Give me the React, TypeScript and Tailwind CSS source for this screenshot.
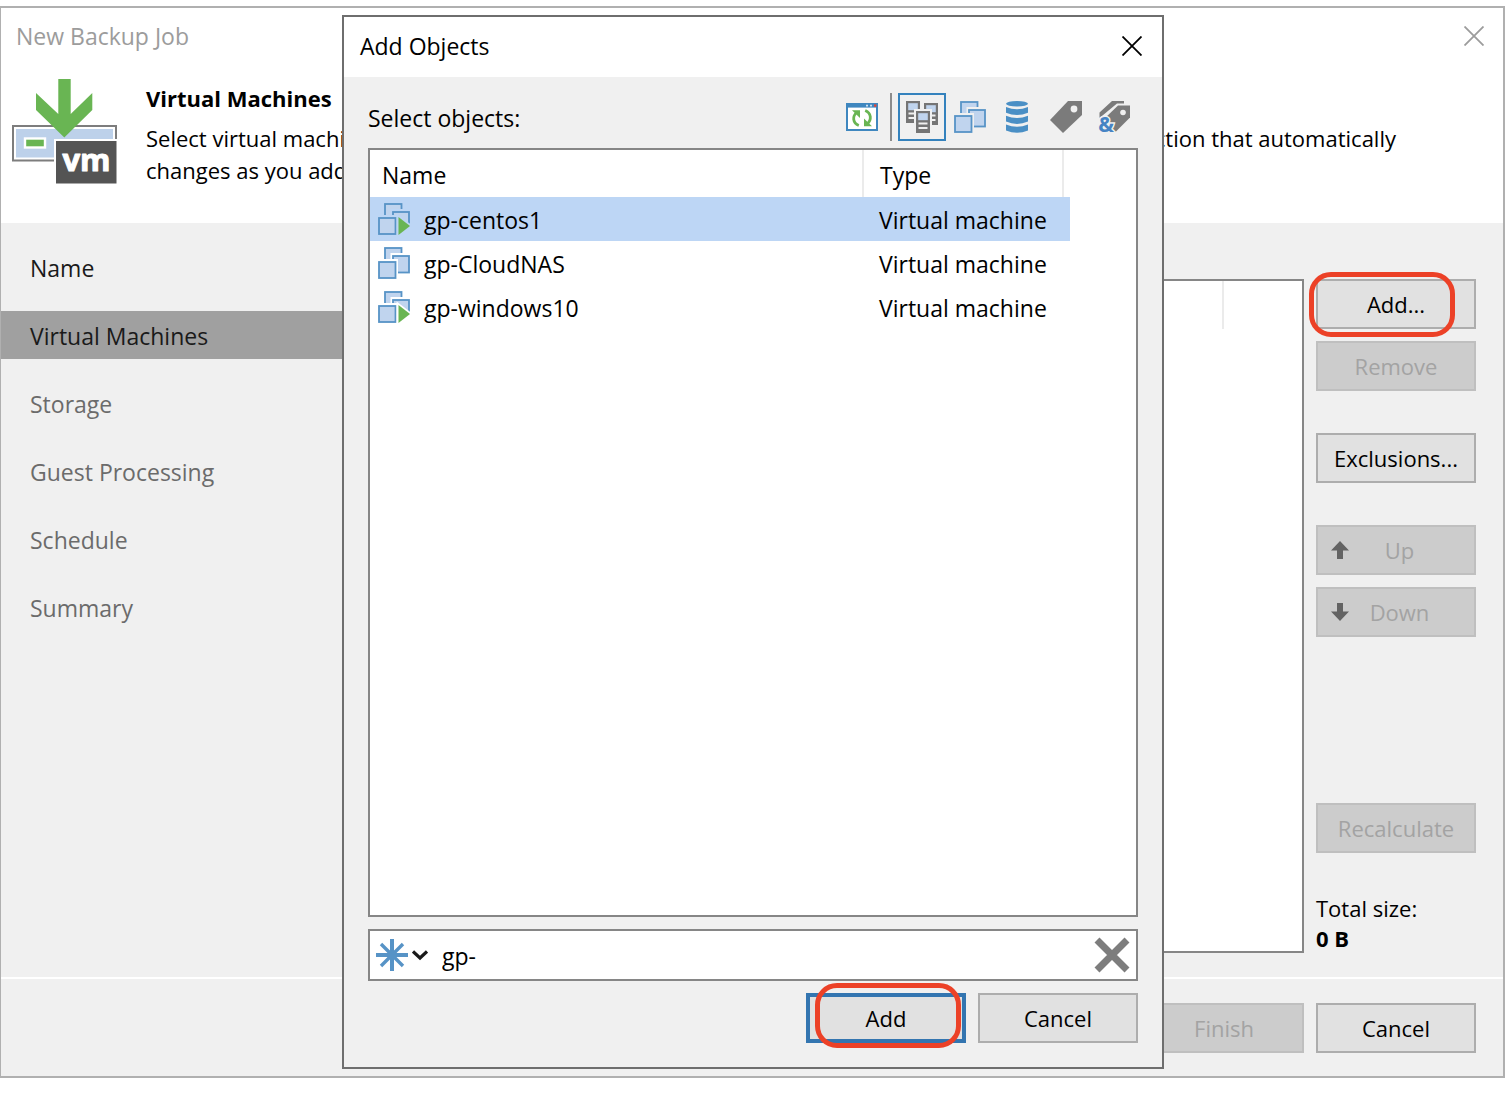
import { useState } from 'react';
import type { ReactNode } from 'react';
import clsx from 'clsx';

const steps = ['Name', 'Virtual Machines', 'Storage', 'Guest Processing', 'Schedule', 'Summary'];

const objects = [
  { name: 'gp-centos1', type: 'Virtual machine', running: true },
  { name: 'gp-CloudNAS', type: 'Virtual machine', running: false },
  { name: 'gp-windows10', type: 'Virtual machine', running: true },
];

function CloseIcon() {
  return (
    <svg className="h-5 w-5" viewBox="0 0 20 20" fill="none" stroke="currentColor" strokeWidth="1.8">
      <path d="M0.5 0.5 19.5 19.5M19.5 0.5 0.5 19.5" />
    </svg>
  );
}

function JobIcon() {
  return (
    <svg className="h-[106px] w-[106px] shrink-0" viewBox="12 78 106 106">
      <rect x="13" y="126" width="103" height="34.5" fill="#fff" stroke="#7d7d7d" strokeWidth="2" />
      <rect x="16" y="129" width="97" height="28.5" fill="#bdd1ea" />
      <rect x="25" y="138.5" width="20" height="9" fill="#69b553" stroke="#fff" strokeWidth="2.4" />
      <path
        d="M58.3 79H70.7V114L92.3 93V110L64.3 137.5L36 110V93L58.3 114Z"
        fill="#69b553"
      />
      <rect x="54" y="139" width="64" height="46" fill="#fff" />
      <rect x="56" y="141" width="60.5" height="42.5" fill="#545454" />
      <text
        x="86.5"
        y="171"
        textAnchor="middle"
        fill="#fff"
        stroke="#fff"
        strokeWidth="1"
        strokeLinejoin="round"
        fontSize="31"
        fontWeight="700"
        fontFamily="Open Sans, sans-serif"
      >
        vm
      </text>
    </svg>
  );
}

// halo is the colour behind the icon, it separates the overlapping squares
function VmIcon({ running = false, halo = '#ffffff' }: { running?: boolean; halo?: string }) {
  return (
    <svg className="h-8 w-8 shrink-0" viewBox="0 0 32 32" fill="#c0d4ee" stroke="#5793c6" strokeWidth="1.8">
      <rect x="7" y="1" width="16.5" height="16" />
      <rect x="12.5" y="6" width="20" height="21" fill={halo} stroke="none" />
      <rect x="15" y="9" width="16" height="16.5" />
      <rect x="-2" y="12" width="22" height="22" fill={halo} stroke="none" />
      <rect x="1" y="15" width="16.5" height="16" />
      {running && (
        <>
          <path d="M18.6 10.5V32H33V21.5Z" fill={halo} stroke="none" />
          <path d="M20.5 14 32 23 20.5 32Z" fill="#69b553" stroke="none" />
        </>
      )}
    </svg>
  );
}

function RefreshIcon() {
  return (
    <svg className="h-7 w-8" viewBox="0 0 32 28" fill="none">
      <rect x="1" y="1" width="30" height="26" fill="#fff" stroke="#3f87bf" strokeWidth="2" />
      <path d="M0 2.3H32" stroke="#3f87bf" strokeWidth="4.6" />
      <path d="M20 2.6h2M24 2.6h2" stroke="#cfe0f0" strokeWidth="1.6" />
      <path d="M28 2.6h2.4" stroke="#e0453a" strokeWidth="2.4" />
      <path d="M12.8 22.5C6.5 20 6.2 13 10.8 9.5M19.2 7.5C25.5 10 25.8 17 21.2 21" stroke="#69b553" strokeWidth="2.8" />
      <path d="M6 7.2H14V15ZM26 23.2H18V15.5Z" fill="#69b553" />
    </svg>
  );
}

function Server({ x, y }: { x: number; y: number }) {
  return (
    <g transform={`translate(${x} ${y})`}>
      <rect width="14" height="22" fill="#757575" />
      <rect x="2.2" y="2.2" width="9.6" height="7" fill="#c0d4ee" />
      <path d="M2.5 12.5H11.5M2.5 17H11.5" stroke="#f0f0f0" strokeWidth="1.8" />
    </g>
  );
}

function HostsIcon() {
  return (
    <svg className="h-8 w-8" viewBox="0 0 32 32">
      <Server x={0} y={0} />
      <Server x={18} y={2} />
      <rect x="8" y="8" width="18" height="24" fill="#f0f0f0" />
      <Server x={10} y={10} />
    </svg>
  );
}

function DatabaseIcon() {
  return (
    <svg className="h-8 w-8" viewBox="0 0 32 32" fill="#4a8fc5">
      <ellipse cx="15" cy="2.8" rx="11" ry="2.8" />
      <path d="M4 6Q15 10.5 26 6V11.8Q15 16.4 4 11.8Z" />
      <path d="M4 14.8Q15 19.3 26 14.8V20.6Q15 25.2 4 20.6Z" />
      <path d="M4 23.6Q15 28.1 26 23.6V29.6Q15 34 4 29.6Z" />
    </svg>
  );
}

function TagIcon() {
  return (
    <svg className="h-8 w-8" viewBox="0 0 32 32">
      <path d="M18 0H32V14L13 32L0 19Z" fill="#7b7b7b" />
      <circle cx="24" cy="8" r="3.4" fill="#f0f0f0" />
    </svg>
  );
}

function TagCombinationIcon() {
  return (
    <svg className="h-8 w-8 overflow-visible" viewBox="0 0 32 32">
      <path d="M14 0H26V2.5H19L1.5 17V11.5Z" fill="#7b7b7b" />
      <path d="M20 4.5H32V16.5L16.5 32L5 19Z" fill="#7b7b7b" />
      <circle cx="25" cy="11.5" r="2.8" fill="#f0f0f0" />
      <text
        x="8"
        y="31"
        textAnchor="middle"
        fill="#4684c4"
        stroke="#f0f0f0"
        strokeWidth="3"
        paintOrder="stroke"
        fontSize="21"
        fontWeight="700"
        fontFamily="Open Sans, sans-serif"
      >
        &amp;
      </text>
    </svg>
  );
}

function MoveArrow({ down = false }: { down?: boolean }) {
  return (
    <svg className={clsx('h-[18px] w-[18px] shrink-0', down && 'rotate-180')} viewBox="0 0 18 18" fill="#636363">
      <path d="M9 0 18 9.5H12V18H6V9.5H0Z" />
    </svg>
  );
}

function PushButton({
  children,
  disabled,
  primary,
  icon,
  onClick,
}: {
  children: ReactNode;
  disabled?: boolean;
  primary?: boolean;
  icon?: ReactNode;
  onClick?: () => void;
}) {
  return (
    <button
      type="button"
      disabled={disabled}
      onClick={onClick}
      className={clsx(
        'flex h-[50px] w-40 shrink-0 items-center justify-center text-[22px]',
        primary ? 'border-4 border-[#3375b0]' : 'border-2',
        !primary && (disabled ? 'border-[#bfbfbf]' : 'border-[#adadad]'),
        disabled ? 'bg-[#cccccc] text-[#a3a3a3]' : 'bg-[#e1e1e1] text-black',
      )}
    >
      {icon ? (
        <span className="flex w-full items-center pr-6 pl-[13px]">
          {icon}
          <span className="flex-1 text-center">{children}</span>
        </span>
      ) : (
        children
      )}
    </button>
  );
}

// Red frame drawn round the buttons the reader has to click
function Highlight({ className, children }: { className: string; children: ReactNode }) {
  return (
    <div className="relative">
      {children}
      <div
        className={clsx(
          'pointer-events-none absolute h-[65px] w-[146px] rounded-[22px] border-5 border-[#ec4127]',
          className,
        )}
      />
    </div>
  );
}

const modes = [
  { label: 'Hosts and Clusters', icon: <HostsIcon /> },
  { label: 'VMs and Templates', icon: <VmIcon halo="#f0f0f0" /> },
  { label: 'Datastores and VMs', icon: <DatabaseIcon /> },
  { label: 'VMs and Tags', icon: <TagIcon /> },
  { label: 'Tag combination', icon: <TagCombinationIcon /> },
];

function AddObjectsDialog() {
  const [mode, setMode] = useState('Hosts and Clusters');
  const [selected, setSelected] = useState('gp-centos1');
  const [query, setQuery] = useState('gp-');

  return (
    <section
      role="dialog"
      aria-label="Add Objects"
      className="w-[822px] max-w-full border-2 border-[#6e6e6e] bg-[#f0f0f0]"
    >
      <div className="flex h-[60px] items-center justify-between bg-white pr-5 pb-[3px] pl-4">
        <h2>Add Objects</h2>
        <button type="button" aria-label="Close">
          <CloseIcon />
        </button>
      </div>

      <div className="flex flex-col px-6 pt-4 pb-6">
        <div className="flex items-center">
          <span className="flex-1 pt-0.5">Select objects:</span>
          <button type="button" aria-label="Refresh" className="mr-3">
            <RefreshIcon />
          </button>
          <div className="mr-1.5 h-12 w-0.5 bg-[#8c8c8c]" />
          {modes.map((item) => (
            <button
              key={item.label}
              type="button"
              aria-label={item.label}
              aria-pressed={mode === item.label}
              onClick={() => setMode(item.label)}
              className={clsx(
                'flex h-12 w-12 items-center justify-center border-2',
                mode === item.label ? 'border-[#3482bd]' : 'border-transparent',
              )}
            >
              {item.icon}
            </button>
          ))}
        </div>

        <div className="mt-[7px] h-[769px] border-2 border-[#868686] bg-white">
          <table className="w-[700px] max-w-full table-fixed border-collapse text-left">
            <thead>
              <tr className="h-[47px]">
                <th className="w-[492px] p-0 font-normal">
                  <div className="flex h-[47px] items-center pt-0.5 pl-3">Name</div>
                </th>
                <th className="p-0 font-normal">
                  <div className="mr-1.5 flex h-[47px] items-center border-x-2 border-[#ebebeb] pt-0.5 pl-4">Type</div>
                </th>
              </tr>
            </thead>
            <tbody>
              {objects.map((row) => (
                <tr
                  key={row.name}
                  onClick={() => setSelected(row.name)}
                  className={clsx('h-11', selected === row.name && 'bg-[#bdd6f5]')}
                >
                  <td className="p-0">
                    <div className="flex h-11 items-center gap-3.5 pl-2">
                      <VmIcon running={row.running} halo={selected === row.name ? '#bdd6f5' : '#ffffff'} />
                      <span className="pt-0.5">{row.name}</span>
                    </div>
                  </td>
                  <td className="p-0 pt-0.5 pl-[17px]">{row.type}</td>
                </tr>
              ))}
            </tbody>
          </table>
        </div>

        <div className="mt-3 flex h-[52px] items-center border-2 border-[#868686] bg-white px-1.5">
          <button type="button" aria-label="Object types" className="flex shrink-0 items-center gap-1">
            <svg className="h-8 w-8" viewBox="0 0 32 32" stroke="#5793c6" fill="none">
              <path d="M16 0V32M0 16H32" strokeWidth="4" />
              <path d="M5 5 27 27M27 5 5 27" strokeWidth="3.4" />
              <circle cx="16" cy="16" r="5" fill="#5793c6" stroke="none" />
            </svg>
            <svg className="h-4 w-4" viewBox="0 0 16 16" fill="none" stroke="#1a1a1a" strokeWidth="3.2">
              <path d="M1 4.5 8 11 15 4.5" />
            </svg>
          </button>
          <input
            type="text"
            aria-label="Search objects"
            value={query}
            onChange={(e) => setQuery(e.target.value)}
            className="ml-3.5 h-full min-w-0 flex-1 bg-transparent pt-0.5 outline-none"
          />
          <button type="button" aria-label="Clear search" onClick={() => setQuery('')}>
            <svg className="h-9 w-9" viewBox="0 0 36 36" stroke="#7d7d7d" strokeWidth="7">
              <path d="M3 3 33 33M33 3 3 33" />
            </svg>
          </button>
        </div>

        <div className="mt-3 flex justify-end gap-3">
          <Highlight className="-top-2.5 left-[9px]">
            <PushButton primary>Add</PushButton>
          </Highlight>
          <PushButton>Cancel</PushButton>
        </div>
      </div>
    </section>
  );
}

export default function App() {
  return (
    <div className="min-h-screen bg-white pt-1.5 pr-[5px] font-['Open_Sans',sans-serif] text-[23px] leading-[30px] text-black">
      <main className="relative border-2 border-l border-[#b0b0b0] bg-[#f0f0f0]">
        <header className="bg-white pb-[37px]">
          <div className="flex h-[58px] items-center justify-between pr-[19px] pb-0.5 pl-[15px] text-[#9c9c9c]">
            <h1>New Backup Job</h1>
            <button type="button" aria-label="Close">
              <CloseIcon />
            </button>
          </div>
          <div className="flex items-start gap-7 pl-[11px]">
            <div className="pt-3">
              <JobIcon />
            </div>
            <div className="min-w-0 flex-1 pt-4 pr-[107px] text-[22px] leading-8">
              <h2 className="mb-2 font-bold">Virtual Machines</h2>
              <p className="flex justify-between whitespace-nowrap">
                <span>Select virtual machines</span>
                <span>selection that automatically</span>
              </p>
              <p>changes as you add</p>
            </div>
          </div>
        </header>

        <div className="flex">
          <nav className="flex w-[342px] shrink-0 flex-col gap-5 pt-5">
            {steps.map((step, i) => (
              <a
                key={step}
                href="#"
                aria-current={i === 1 ? 'step' : undefined}
                className={clsx(
                  'flex h-12 items-center pt-0.5 pl-[29px]',
                  i === 1 && 'bg-[#a0a0a0]',
                  i > 1 ? 'text-[#6b6b6b]' : 'text-[#1a1a1a]',
                )}
              >
                {step}
              </a>
            ))}
          </nav>

          <div className="flex flex-1 gap-3 pt-14 pr-[27px] pb-6 pl-4">
            <div className="flex flex-1 justify-end border-2 border-[#868686] bg-white pr-[78px]">
              <div className="h-12 w-40 border-r-2 border-[#ebebeb]" />
            </div>
            <div className="flex w-40 shrink-0 flex-col">
              <Highlight className="-top-[7px] -left-[7px]">
                <PushButton>Add...</PushButton>
              </Highlight>
              <div className="mt-3 flex flex-col gap-[42px]">
                <PushButton disabled>Remove</PushButton>
                <PushButton>Exclusions...</PushButton>
                <div className="flex flex-col gap-3">
                  <PushButton disabled icon={<MoveArrow />}>
                    Up
                  </PushButton>
                  <PushButton disabled icon={<MoveArrow down />}>
                    Down
                  </PushButton>
                </div>
              </div>
              <div className="mt-[166px]">
                <PushButton disabled>Recalculate</PushButton>
              </div>
              <div className="mt-10 text-[22px] leading-[30px]">
                <p>Total size:</p>
                <p className="font-bold">0 B</p>
              </div>
            </div>
          </div>
        </div>

        <footer className="flex justify-end gap-3 border-t-2 border-white pt-6 pr-[27px] pb-[23px]">
          <PushButton disabled>Finish</PushButton>
          <PushButton>Cancel</PushButton>
        </footer>

        <div className="absolute inset-0 flex items-center justify-center pl-0.5">
          <AddObjectsDialog />
        </div>
      </main>
    </div>
  );
}
